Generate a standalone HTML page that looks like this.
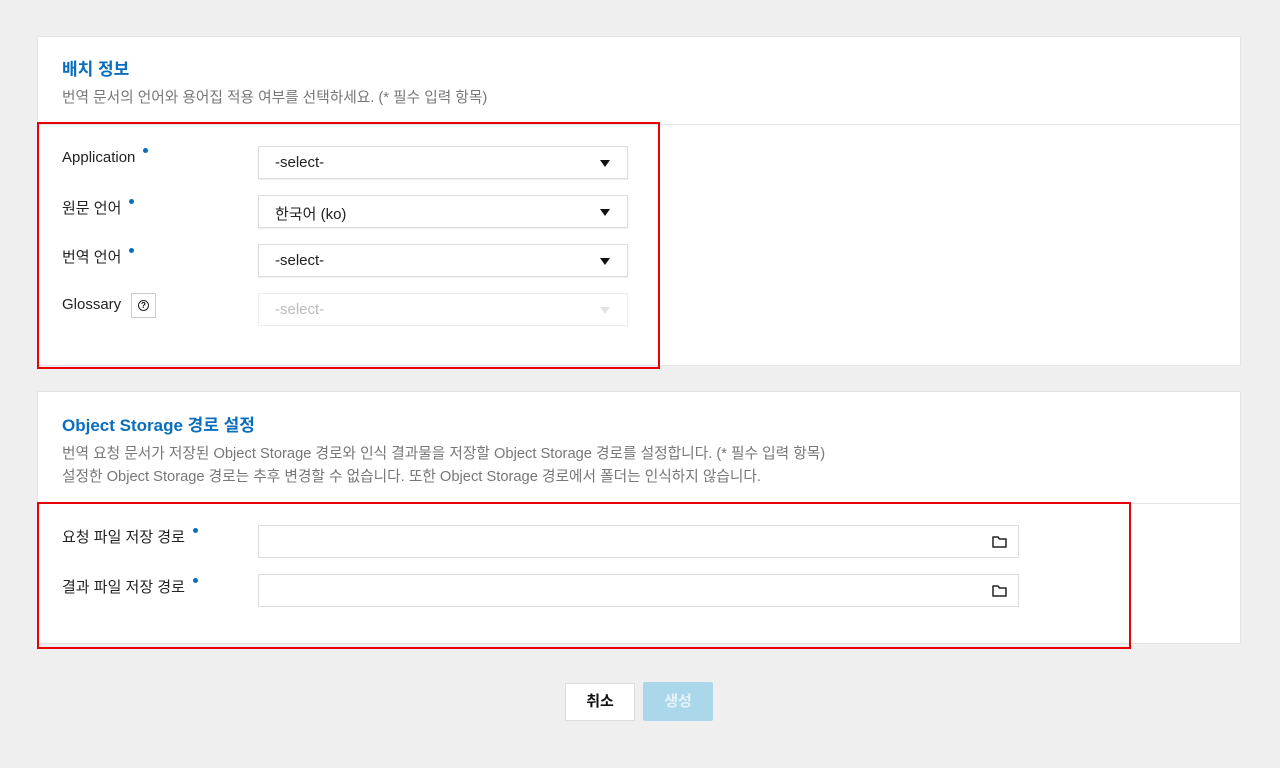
<!DOCTYPE html>
<html><head><meta charset="utf-8"><style>
*{box-sizing:border-box;margin:0;padding:0}
body{width:1280px;height:768px;background:#efefef;font-family:"Liberation Sans","Noto Sans CJK KR",sans-serif;position:relative;overflow:hidden}
.a{position:absolute}
.panel{position:absolute;left:37px;width:1204px;background:#fff;border:1px solid #e4e4e4}
.title{color:#0a6ebd;font-weight:bold;font-size:17px}
.desc{color:#777;font-size:14.7px}
.lbl{font-size:15px;color:#222}
.dot{display:inline-block;width:5px;height:5px;border-radius:50%;background:#0a6ebd;margin-left:8px;vertical-align:9px}
.sel{position:absolute;left:258px;width:370px;height:33px;border:1px solid #ddd;font-size:15px;color:#222;padding:7px 16px;box-shadow:0 1px 1px rgba(0,0,0,.08)}
.sel:after{content:"";position:absolute;right:17px;top:13px;border-left:5px solid transparent;border-right:5px solid transparent;border-top:7px solid #111}
.sel.dis{color:#bbb;border-color:#eee;box-shadow:none}
.sel.dis:after{border-top-color:#e4e4e4}
.inp{position:absolute;left:258px;width:761px;height:33px;border:1px solid #ddd}
.inp svg{position:absolute;right:11px;top:9px}
.red{position:absolute;border:2px solid #e8000b}
</style></head><body>
<div class="panel" style="top:36px;height:330px"></div>
<div class="a title" style="left:62px;top:55px">배치 정보</div>
<div class="a desc" style="left:62px;top:86px">번역 문서의 언어와 용어집 적용 여부를 선택하세요. (* 필수 입력 항목)</div>
<div class="a" style="left:38px;top:124px;width:1202px;height:1px;background:#e4e4e4"></div>
<div class="a lbl" style="left:62px;top:148px">Application<span class="dot"></span></div>
<div class="a lbl" style="left:62px;top:197px">원문 언어<span class="dot"></span></div>
<div class="a lbl" style="left:62px;top:246px">번역 언어<span class="dot"></span></div>
<div class="a lbl" style="left:62px;top:296px">Glossary</div>
<div class="a" style="left:131px;top:293px;width:25px;height:25px;border:1px solid #ccc;font-size:10px;text-align:center;line-height:23px"><span style="display:inline-block;width:11px;height:11px;border:1.3px solid #222;border-radius:50%;line-height:9px;font-size:8px;font-weight:bold">?</span></div>
<div class="sel" style="top:146px">-select-</div>
<div class="sel" style="top:195px">한국어 (ko)</div>
<div class="sel" style="top:244px">-select-</div>
<div class="sel dis" style="top:293px">-select-</div>
<div class="red" style="left:37px;top:122px;width:623px;height:247px"></div>

<div class="panel" style="top:391px;height:253px"></div>
<div class="a title" style="left:62px;top:411px">Object Storage 경로 설정</div>
<div class="a desc" style="left:62px;top:442px">번역 요청 문서가 저장된 Object Storage 경로와 인식 결과물을 저장할 Object Storage 경로를 설정합니다. (* 필수 입력 항목)</div>
<div class="a desc" style="left:62px;top:465px">설정한 Object Storage 경로는 추후 변경할 수 없습니다. 또한 Object Storage 경로에서 폴더는 인식하지 않습니다.</div>
<div class="a" style="left:38px;top:503px;width:1202px;height:1px;background:#e4e4e4"></div>
<div class="a lbl" style="left:62px;top:526px">요청 파일 저장 경로<span class="dot"></span></div>
<div class="a lbl" style="left:62px;top:576px">결과 파일 저장 경로<span class="dot"></span></div>
<div class="inp" style="top:525px"><svg width="15" height="13" viewBox="0 0 15 13"><path d="M1 2h5l1.5 2H14v8H1z" fill="none" stroke="#222" stroke-width="1.5" stroke-linejoin="round"/></svg></div>
<div class="inp" style="top:574px"><svg width="15" height="13" viewBox="0 0 15 13"><path d="M1 2h5l1.5 2H14v8H1z" fill="none" stroke="#222" stroke-width="1.5" stroke-linejoin="round"/></svg></div>
<div class="red" style="left:37px;top:502px;width:1094px;height:147px"></div>

<div class="a" style="left:565px;top:683px;width:70px;height:38px;background:#fff;border:1px solid #ddd;font-size:15px;font-weight:bold;text-align:center;line-height:36px;color:#111">취소</div>
<div class="a" style="left:643px;top:682px;width:70px;height:39px;background:#aad8ea;border-radius:2px;font-size:15px;font-weight:bold;text-align:center;line-height:39px;color:#e4f3f9">생성</div>
</body></html>
